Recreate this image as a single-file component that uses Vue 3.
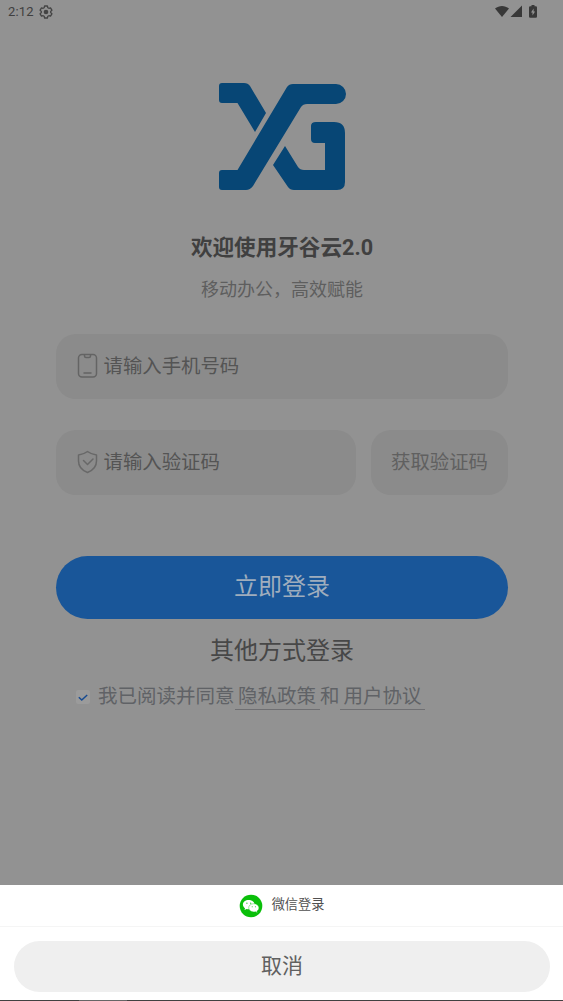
<script setup>
import { ref } from 'vue'

const agreed = ref(true)
</script>

<template>
  <div class="screen">
    <header class="status">
      <span class="time">2:12</span>
      <svg class="gear" viewBox="0 0 14 14" width="14" height="14">
        <path d="M5.6 1h2.8l.4 1.7 1.1.6 1.6-.5 1.4 2.4L11.700 6.400v1.200l1.200 1.200-1.400 2.400-1.600-.5-1.100.6-.4 1.700H5.600l-.4-1.700-1.100-.6-1.600.5-1.400-2.400 1.200-1.200V6.400L1.100 5.200l1.400-2.400 1.600.5 1.100-.6z" fill="none" stroke="#444" stroke-width="1.300" stroke-linejoin="round" />
        <circle cx="7" cy="7" r="2.300" fill="#444" />
      </svg>
      <svg class="signals" viewBox="0 0 44 16" width="44" height="16" fill="#383838">
        <path d="M0 4.600C4.200 1.200 9.800 1.200 14 4.600L7 13z" />
        <path d="M27 1.500V13H15.500z" />
        <path fill-rule="evenodd" d="M36.500 1h3v1.300h1.300q1.200 0 1.200 1.200V12.500q0 1.200-1.200 1.200H35.200q-1.200 0-1.200-1.200V3.500q0-1.200 1.200-1.200h1.300zM38.600 4.500L36 8.600h1.500v3L40.100 7.500H38.600z" />
      </svg>
    </header>

    <main class="page">
      <svg class="logo" viewBox="0 0 128 108" width="128" height="108" fill="#074675">
        <path d="M3 0H25Q29 0 31 3L47 30L36 49L18.500 20H3Q0 20 0 17V3Q0 0 3 0Z" />
        <path d="M68 4Q70 1 74 1H117A10 10 0 0 1 117 21H88Q84 21 82 24L34 103Q31 107 27 107H3Q0 107 0 104V90Q0 87 3 87H18.500Z" />
        <path d="M66 63L79 84Q81 87 85 87H106V60H96Q92 60 92 56V43Q92 39 97 39H115Q126 39 126 50V99Q126 107 118 107H75Q71 107 69 104L54 82Z" />
      </svg>
      <h1 class="title">欢迎使用牙谷云2.0</h1>
      <p class="subtitle">移动办公，高效赋能</p>

      <div class="field phone">
        <svg viewBox="0 0 22 26" width="22" height="26" fill="none" stroke="#646464" stroke-width="1.500" stroke-linecap="round">
          <rect x="1.500" y="1.500" width="18" height="22.500" rx="3.500" />
          <path d="M7.500 2v1q0 1.500 1.500 1.500h3q1.500 0 1.500-1.500V2M7 20h7" />
        </svg>
        <span>请输入手机号码</span>
      </div>
      <div class="code-row">
        <div class="field">
          <svg viewBox="0 0 22 26" width="22" height="26" fill="none" stroke="#686868" stroke-width="1.500" stroke-linecap="round" stroke-linejoin="round">
            <path d="M10.500 2.500Q14.500 5.500 19.500 6V12Q19.500 20 10.500 23.500Q1.500 20 1.500 12V6Q6.500 5.500 10.500 2.500Z" />
            <path d="M6.500 11.500l4 4 5.500-5.500" />
          </svg>
          <span>请输入验证码</span>
        </div>
        <div class="field send">获取验证码</div>
      </div>

      <button class="login">立即登录</button>
      <div class="other">其他方式登录</div>
      <div class="agreement">
        <span class="check" @click="agreed = !agreed">
          <svg v-if="agreed" viewBox="0 0 14 14" width="14" height="14">
            <path d="M2.800 7.200l3 2.800 5.400-5" fill="none" stroke="#174b91" stroke-width="1.500" />
          </svg>
        </span>
        <span>我已阅读并同意</span><a class="link">隐私政策</a><span class="and">和</span><a class="link">用户协议</a>
      </div>
    </main>

    <section class="sheet">
      <div class="wechat">
        <svg viewBox="0 0 24 24" width="24" height="24">
          <circle cx="12" cy="12" r="11.300" fill="#0abf0a" />
          <path d="M9.800 5.900c-3.400 0-5.900 2-5.900 4.700 0 1.500.8 2.800 2.100 3.600l-.5 1.800 2.100-1.100c.7.200 1.400.3 2.200.3 3.400 0 5.800-2.100 5.800-4.600S13.200 5.900 9.800 5.900z" fill="#fff" />
          <path d="M14.800 9.700c-3 0-5.100 1.800-5.100 4.100s2.100 4.100 5.100 4.100c.6 0 1.200-.1 1.700-.2l1.900 1-.5-1.600c1.300-.8 2-1.900 2-3.300 0-2.300-2.200-4.100-5.100-4.100z" fill="#fff" stroke="#0abf0a" stroke-width=".4" />
          <g fill="#0abf0a"><circle cx="7.900" cy="9.200" r=".6" /><circle cx="11.700" cy="9.200" r=".6" /><circle cx="13.200" cy="12.800" r=".5" /><circle cx="16.400" cy="12.800" r=".5" /></g>
        </svg>
        <span>微信登录</span>
      </div>
      <button class="cancel">取消</button>
      <div class="edge"><i></i></div>
    </section>
  </div>
</template>

<style>
body { margin: 0; background: #929292; }
</style>

<style scoped>
.screen {
  width: 563px;
  height: 1001px;
  display: flex;
  flex-direction: column;
  overflow: hidden;
  background: #929292;
  color: #474747;
  font-family: Roboto, "Noto Sans CJK SC", sans-serif;
  box-sizing: border-box;
}
.status {
  display: flex;
  align-items: center;
  height: 24px;
  padding: 0 24px 1px 8px;
  box-sizing: border-box;
}
.time { font-size: 13px; letter-spacing: .2px; color: #3f3f3f; }
.gear { margin-left: 5px; }
.signals { margin-left: auto; }
.page {
  flex: 1;
  display: flex;
  flex-direction: column;
  padding: 59px 55px 0 56px;
}
.logo { align-self: center; flex: none; margin-left: 2px; }
.title {
  margin: 41px 0 0;
  height: 32px;
  line-height: 32px;
  text-align: center;
  font-size: 21.600px;
  font-weight: 700;
  color: #404040;
}
.subtitle {
  margin: 13px 0 0;
  height: 26px;
  line-height: 26px;
  text-align: center;
  font-size: 18px;
  color: #5e5e5e;
}
.field {
  display: flex;
  align-items: center;
  height: 65px;
  padding: 0 0 4px 21px;
  box-sizing: border-box;
  border-radius: 20px;
  background: #8b8b8b;
  font-size: 19.400px;
  color: #545454;
}
.field svg { margin: 2px 4.500px 0 0; flex: none; }
.phone { margin-top: 31px; }
.code-row { display: grid; grid-template-columns: 300px 137px; gap: 15px; margin-top: 31px; }
.send { justify-content: center; padding-left: 0; color: #606060; }
.login {
  margin: 61px 0 0;
  height: 63px;
  padding: 0 0 6px;
  border: 0;
  border-radius: 32px;
  background: #195699;
  color: #9fadbd;
  font-family: inherit;
  font-size: 24px;
}
.other { height: 36px; line-height: 36px; margin-top: 14px; text-align: center; font-size: 24px; }
.agreement {
  display: flex;
  align-items: center;
  height: 28px;
  margin-top: 13px;
  padding-left: 20px;
  font-size: 19.500px;
  line-height: 28px;
  color: #606266;
}
.agreement > span:not(.check) { height: 26px; }
.check {
  width: 14px;
  height: 14px;
  margin: 2px 8px 0 0;
  border-radius: 2px;
  background: #9b9b9b;
  display: flex;
}
.link { height: 26px; padding: 0 3.500px; border-bottom: 1px solid #6f6f72; }
.and { padding: 0 .5px; }
.sheet { height: 116px; background: #fff; display: flex; flex-direction: column; }
.wechat {
  height: 41px;
  display: flex;
  align-items: center;
  justify-content: center;
  border-bottom: 1px solid #f5f5f5;
  font-size: 13.200px;
  color: #505050;
}
.wechat svg { margin-right: 9px; }
.wechat span { padding-bottom: 4px; }
.cancel {
  height: 51px;
  margin: 14px 13px 0 14px;
  padding: 0 0 5px;
  border: 0;
  border-radius: 26px;
  background: #efefef;
  color: #606060;
  font-family: inherit;
  font-size: 21px;
}
.edge { height: 1px; margin-top: auto; background: #414141; }
.edge i { display: block; width: 48px; height: 1px; margin-left: 79px; background: #666; }
</style>
